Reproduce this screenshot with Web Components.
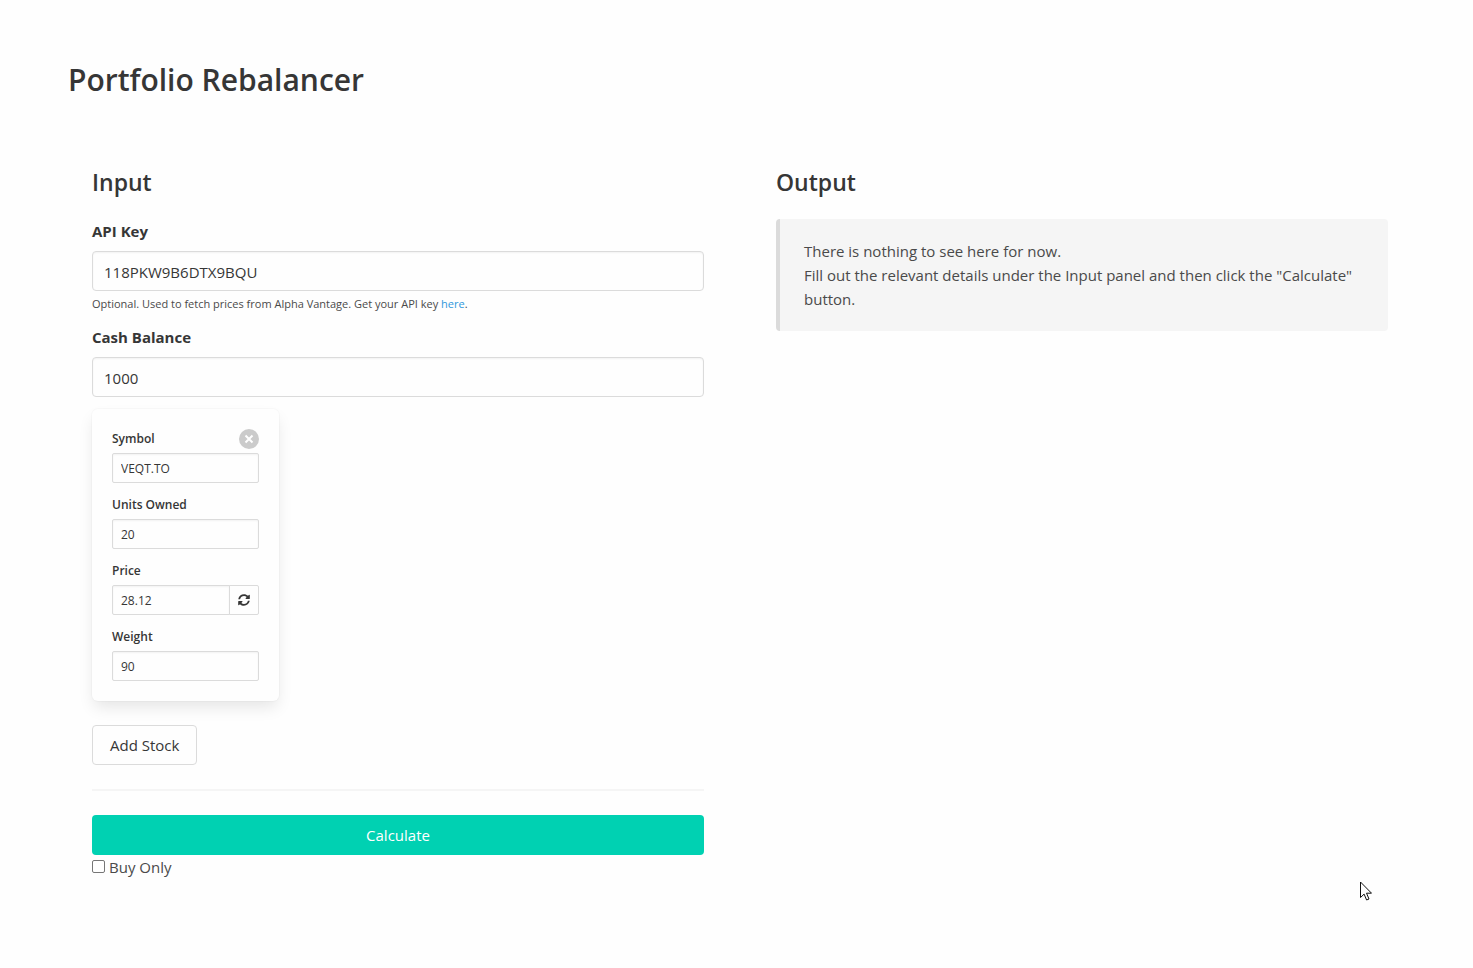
<!DOCTYPE html>
<html lang="en">
<head>
<meta charset="utf-8">
<meta name="viewport" content="width=device-width, initial-scale=1">
<title>Portfolio Rebalancer</title>
<style>
  html { background: #fefefe; }
  body {
    margin: 0;
    color: #4a4a4a;
    font: 400 15px/24px "Open Sans", "Noto Sans", sans-serif;
    --strong: #363636;
    --line: #dbdbdb;
    --primary: #00d1b2;
    --link: #3298dc;
    --soft: #f5f5f5;
  }
</style>
</head>
<body>
<rebalancer-app></rebalancer-app>

<script>
const define = (name, html, setup) => {
  const template = document.createElement('template');
  template.innerHTML = html;
  customElements.define(name, class extends HTMLElement {
    constructor() {
      super();
      this.attachShadow({ mode: 'open' }).append(template.content.cloneNode(true));
    }
    connectedCallback() {
      if (setup && !this.ready) { this.ready = true; setup(this, this.shadowRoot); }
    }
  });
};

/* Titled column of the page */
define('app-panel', `
  <style>
    :host { display: block; padding: 24px; min-width: 0; }
    h2 { margin: 0 0 22px; font-size: 23px; line-height: 30px; font-weight: 600; color: var(--strong); }
  </style>
  <section><h2></h2><slot></slot></section>`,
  (host, root) => { root.querySelector('h2').textContent = host.getAttribute('heading'); });

/* Label, text box, optional trailing control and help line */
define('text-field', `
  <style>
    :host { display: block; margin-bottom: 12px; }
    label { display: block; margin-bottom: 8px; font-weight: 700; color: var(--strong); }
    .row { display: flex; }
    input {
      box-sizing: border-box; flex: 1; min-width: 0; width: 100%; height: 40px; margin: 0;
      padding: 2px 11px 0; border: 1px solid var(--line); border-radius: 4px;
      background: #fefefe; color: var(--strong); font: inherit;
      box-shadow: inset 0 1px 2px rgba(10, 10, 10, .05);
    }
    :host([small]) { font-size: 12px; line-height: 18px; }
    :host([small]) label { margin-bottom: 4px; line-height: 20px; font-weight: 600; }
    :host([small]) input { height: 30px; padding: 1px 8px 0; border-radius: 2px; }
    :host([addon]) input { border-radius: 2px 0 0 2px; }
    ::slotted([slot=help]) { margin: 4px 0 0; font-size: 11px; line-height: 18px; }
  </style>
  <label for="box"></label>
  <div class="row"><input id="box" type="text"><slot name="addon"></slot></div>
  <slot name="help"></slot>`,
  (host, root) => {
    root.querySelector('label').textContent = host.getAttribute('label');
    root.querySelector('input').value = host.getAttribute('value');
  });

define('app-button', `
  <style>
    :host { display: block; }
    button {
      box-sizing: border-box; height: 40px; padding: 0 17px; border: 1px solid var(--line);
      border-radius: 4px; background: #fefefe; color: var(--strong); font: inherit; cursor: pointer;
    }
    :host([primary]) button { width: 100%; border: 0; background: var(--primary); color: #fff; }
  </style>
  <button type="button"><slot></slot></button>`);

define('refresh-button', `
  <style>
    :host { display: block; margin-left: -1px; }
    button {
      box-sizing: border-box; display: grid; place-items: center; width: 30px; height: 30px; padding: 0;
      border: 1px solid var(--line); border-radius: 0 2px 2px 0; background: #fefefe; color: var(--strong);
    }
    svg { display: block; width: 12px; height: 12px; }
  </style>
  <button type="button" aria-label="Refresh price">
    <svg viewBox="0 0 512 512" fill="currentColor" aria-hidden="true"><path d="M370.72 133.28C339.458 104.008 298.888 87.962 255.848 88c-77.458.068-144.328 53.178-162.791 126.85-1.344 5.363-6.122 9.15-11.651 9.15H24.103c-7.498 0-13.194-6.807-11.807-14.176C33.933 94.924 134.813 8 256 8c66.448 0 126.791 26.136 171.315 68.685L463.03 40.97C478.149 25.851 504 36.559 504 57.941V192c0 13.255-10.745 24-24 24H345.941c-21.382 0-32.09-25.851-16.971-40.971l41.75-41.749zM32 296h134.059c21.382 0 32.09 25.851 16.971 40.971l-41.75 41.75c31.262 29.273 71.835 45.319 114.876 45.28 77.418-.07 144.315-53.144 162.787-126.849 1.344-5.363 6.122-9.15 11.651-9.15h57.304c7.498 0 13.194 6.807 11.807 14.176C478.067 417.076 377.187 504 256 504c-66.448 0-126.791-26.136-171.315-68.685L48.97 471.03C33.851 486.149 8 475.441 8 454.059V320c0-13.255 10.745-24 24-24z"/></svg>
  </button>`);

define('stock-card', `
  <style>
    :host {
      box-sizing: border-box; display: flow-root; position: relative; width: 187px; padding: 20px 20px 8px;
      border-radius: 6px; background: #fefefe;
      box-shadow: 0 8px 16px -2px rgba(10, 10, 10, .1), 0 0 0 1px rgba(10, 10, 10, .02);
    }
    .remove {
      position: absolute; top: 20px; right: 20px; display: grid; place-items: center;
      width: 20px; height: 20px; padding: 0; border: 0; border-radius: 50%; background: #cbcbcb; color: #fff;
    }
    svg { display: block; width: 10px; height: 10px; }
  </style>
  <button class="remove" type="button" aria-label="Remove stock">
    <svg viewBox="0 0 10 10" fill="none" stroke="currentColor" stroke-width="2" aria-hidden="true"><path d="M1.500 1.500l7 7M8.500 1.500l-7 7"/></svg>
  </button>
  <text-field small label="Symbol" value="VEQT.TO"></text-field>
  <text-field small label="Units Owned" value="20"></text-field>
  <text-field small addon label="Price" value="28.12"><refresh-button slot="addon"></refresh-button></text-field>
  <text-field small label="Weight" value="90"></text-field>`);

define('check-field', `
  <style>
    :host { display: block; }
    label { display: inline-flex; gap: 4px; }
    input {
      appearance: none; box-sizing: border-box; width: 13px; height: 13px; margin: 5px 0 0;
      border: 1px solid #767676; border-radius: 2px; background: #fff;
    }
    input:checked { background: var(--primary); }
  </style>
  <label><input type="checkbox"><span><slot></slot></span></label>`);

define('app-message', `
  <style>
    :host { display: block; padding: 20px 24px; border-left: 4px solid var(--line); border-radius: 4px; background: var(--soft); }
    p { margin: 0; }
  </style>
  <p><slot></slot></p>`);

/* Mouse pointer resting over the page */
define('mouse-pointer', `
  <style>
    :host { position: absolute; left: 1360px; top: 881px; pointer-events: none; }
    svg { display: block; width: 12px; height: 20px; }
  </style>
  <svg viewBox="0 0 12 20" aria-hidden="true"><path d="M.5 1v15.500l3.600-3.400 2.500 5.900 2.400-1-2.500-5.800h5z" fill="#fff" stroke="#111" stroke-width="1"/></svg>`);

define('rebalancer-app', `
  <style>
    :host { display: block; padding: 60px 61px 60px 68px; }
    h1 { margin: 0 0 43px; font-size: 30px; line-height: 40px; font-weight: 600; color: var(--strong); }
    main { display: grid; grid-template-columns: minmax(0, 1fr) minmax(0, 1fr); gap: 24px; }
    a { color: var(--link); text-decoration: none; }
    app-button:not([primary]) { margin-top: 24px; }
    hr { height: 2px; margin: 24px 0; border: 0; background: var(--soft); }
    @media (max-width: 768px) {
      :host { padding: 24px; }
      main { grid-template-columns: minmax(0, 1fr); }
      mouse-pointer { display: none; }
    }
  </style>
  <h1>Portfolio Rebalancer</h1>
  <main>
    <app-panel heading="Input">
      <text-field label="API Key" value="118PKW9B6DTX9BQU">
        <p slot="help">Optional. Used to fetch prices from Alpha Vantage. Get your API key <a href="#">here</a>.</p>
      </text-field>
      <text-field label="Cash Balance" value="1000"></text-field>
      <stock-card></stock-card>
      <app-button>Add Stock</app-button>
      <hr>
      <app-button primary>Calculate</app-button>
      <check-field>Buy Only</check-field>
    </app-panel>
    <app-panel heading="Output">
      <app-message>There is nothing to see here for now.<br>Fill out the relevant details under the Input panel and then click the "Calculate" button.</app-message>
    </app-panel>
  </main>
  <mouse-pointer></mouse-pointer>`);
</script>
</body>
</html>
